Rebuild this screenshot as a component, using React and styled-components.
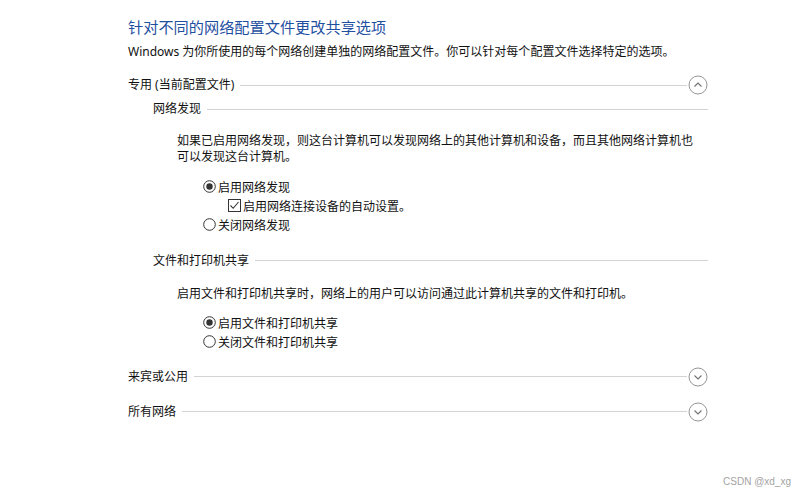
import React from 'react';
import styled, { createGlobalStyle } from 'styled-components';

const GlobalStyle = createGlobalStyle`
    html, body {
        margin: 0;
        padding: 0;
        background: #ffffff;
    }
    body {
        font-family: "Noto Sans", "Noto Sans CJK SC", sans-serif;
        font-size: 12px;
        color: #111111;
    }
`

const ChevronCircle = ({ up }) => (
    <svg width="20" height="20" viewBox="0 0 20 20">
        <circle cx="10" cy="10" r="9" fill="none" stroke="#959595" strokeWidth="1" />
        {up
            ? <polyline points="6.5,11.5 10,8 13.5,11.5" fill="none" stroke="#707070" strokeWidth="1.1" />
            : <polyline points="6.5,8.5 10,12 13.5,8.5" fill="none" stroke="#707070" strokeWidth="1.1" />}
    </svg>
)

const RadioIcon = ({ checked }) => (
    <svg width="13" height="13" viewBox="0 0 13 13">
        <circle cx="6.5" cy="6.5" r="5.8" fill="#fff" stroke="#333" strokeWidth="1" />
        {checked && <circle cx="6.5" cy="6.5" r="3.2" fill="#333" />}
    </svg>
)

const CheckIcon = () => (
    <svg width="13" height="13" viewBox="0 0 13 13">
        <rect x="0.5" y="0.5" width="12" height="12" fill="#fff" stroke="#333" strokeWidth="1" />
        <polyline points="2.5,6.5 5.2,9.3 10.5,3" fill="none" stroke="#333" strokeWidth="1.1" />
    </svg>
)

const sections = [
    { label: '来宾或公用', gap: 15.5 },
    { label: '所有网络', gap: 15 }
]

export default function App() {
    return (
        <Page>
            <GlobalStyle />
            <Content>
                <Title>针对不同的网络配置文件更改共享选项</Title>
                <Subtitle>Windows 为你所使用的每个网络创建单独的网络配置文件。你可以针对每个配置文件选择特定的选项。</Subtitle>

                <SectionHeader gap={15}>
                    <SectionLabel>专用 (当前配置文件)</SectionLabel>
                    <Rule />
                    <Toggle><ChevronCircle up /></Toggle>
                </SectionHeader>

                <SubBlock>
                    <SubHeader gap={6}>
                        <SectionLabel>网络发现</SectionLabel>
                        <Rule />
                    </SubHeader>
                    <Paragraph gap={16}>
                        如果已启用网络发现，则这台计算机可以发现网络上的其他计算机和设备，而且其他网络计算机也可以发现这台计算机。
                    </Paragraph>
                    <Options gap={12}>
                        <Option><RadioIcon checked /><span>启用网络发现</span></Option>
                        <Option indent><CheckIcon /><span>启用网络连接设备的自动设置。</span></Option>
                        <Option><RadioIcon /><span>关闭网络发现</span></Option>
                    </Options>

                    <SubHeader gap={18.5}>
                        <SectionLabel>文件和打印机共享</SectionLabel>
                        <Rule />
                    </SubHeader>
                    <Paragraph gap={17}>
                        启用文件和打印机共享时，网络上的用户可以访问通过此计算机共享的文件和打印机。
                    </Paragraph>
                    <Options gap={11.5}>
                        <Option><RadioIcon checked /><span>启用文件和打印机共享</span></Option>
                        <Option><RadioIcon /><span>关闭文件和打印机共享</span></Option>
                    </Options>
                </SubBlock>

                {sections.map(s => (
                    <SectionHeader key={s.label} gap={s.gap}>
                        <SectionLabel>{s.label}</SectionLabel>
                        <Rule />
                        <Toggle><ChevronCircle /></Toggle>
                    </SectionHeader>
                ))}
            </Content>
            <Watermark>CSDN @xd_xg</Watermark>
        </Page>
    )
}

const Page = styled.div`
    position: relative;
    width: 808px;
    height: 496px;
    overflow: hidden;
`

const Content = styled.div`
    width: 580px;
    padding: 17px 0 0 128px;
    display: flex;
    flex-direction: column;
`

const Title = styled.div`
    font-size: 15.2px;
    line-height: 20px;
    color: #1f4f9f;
    white-space: nowrap;
`

const Subtitle = styled.div`
    margin-top: 7px;
    line-height: 16px;
    white-space: nowrap;
`

const SectionHeader = styled.div`
    margin-top: ${p => p.gap}px;
    height: 20px;
    display: flex;
    align-items: center;
`

const SubBlock = styled.div`
    padding-left: 25px;
    display: flex;
    flex-direction: column;
`

const SubHeader = styled.div`
    margin-top: ${p => p.gap}px;
    height: 16px;
    display: flex;
    align-items: center;
`

const SectionLabel = styled.span`
    line-height: 16px;
    white-space: nowrap;
`

const Rule = styled.div`
    flex: 1;
    height: 0;
    border-top: 1px solid #d3d3d3;
    margin-left: 6px;
`

const Toggle = styled.div`
    width: 20px;
    height: 20px;
    margin-left: 1px;
    display: flex;
`

const Paragraph = styled.div`
    margin-top: ${p => p.gap}px;
    padding-left: 24px;
    width: 524px;
    line-height: 16px;
`

const Options = styled.div`
    margin-top: ${p => p.gap}px;
    padding-left: 50px;
    display: flex;
    flex-direction: column;
`

const Option = styled.div`
    height: 19px;
    display: flex;
    align-items: center;
    gap: 2px;
    padding-left: ${p => (p.indent ? 25 : 0)}px;
    white-space: nowrap;

    svg {
        flex-shrink: 0;
    }
`

const Watermark = styled.div`
    position: absolute;
    right: 17px;
    bottom: 9px;
    font-size: 10px;
    color: #a3a3a3;
    font-family: "Liberation Sans", Arial, sans-serif;
`
